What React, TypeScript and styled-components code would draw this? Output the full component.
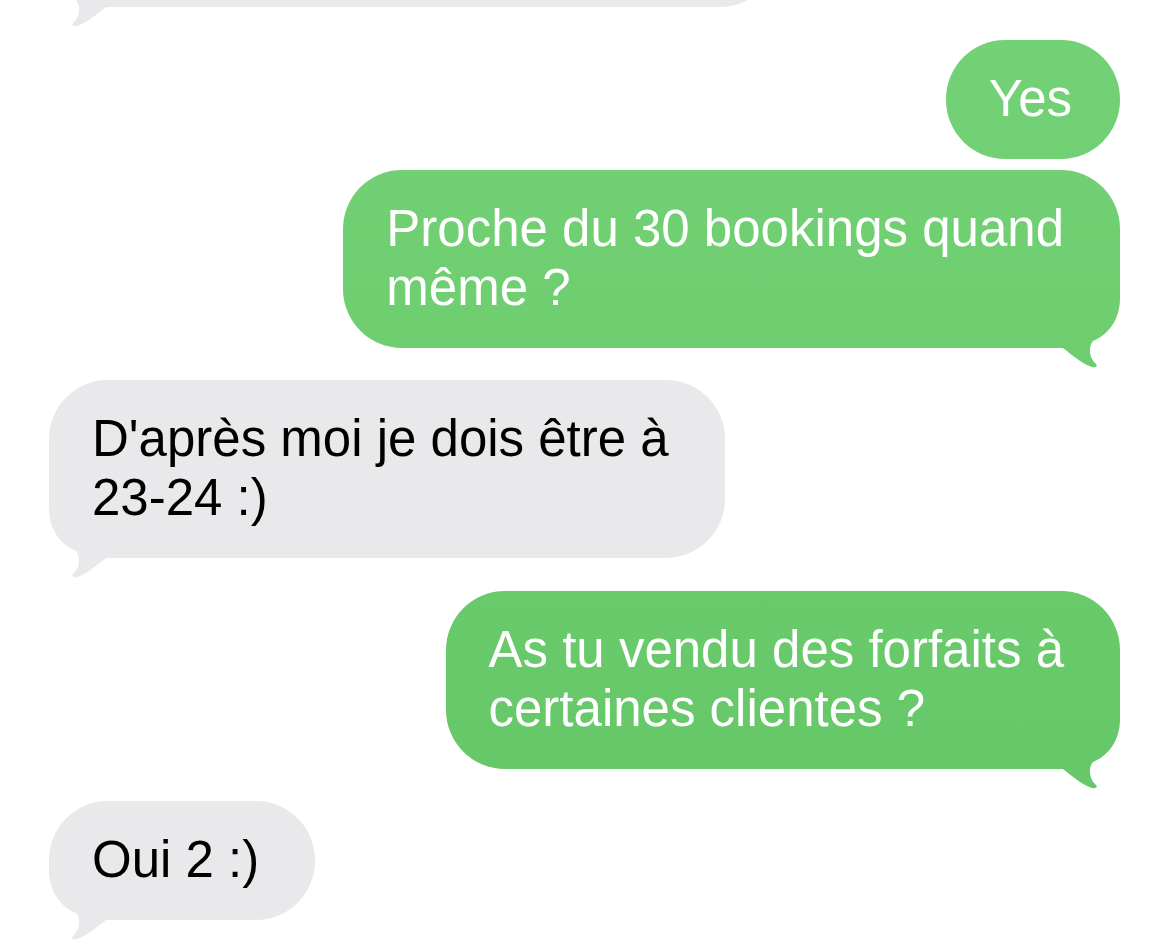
import React from "react";
import styled, { createGlobalStyle, css } from "styled-components";

const GlobalStyle = createGlobalStyle`
  html, body {
    margin: 0;
    padding: 0;
    background: #ffffff;
  }
  #root {
    height: 947px;
    overflow: hidden;
  }
`;

type Side = "in" | "out";

interface Message {
  side: Side;
  lines: string[];
  tail: boolean;
  gap: number;
  width?: number;
  height?: number;
}

const messages: Message[] = [
  { side: "in", lines: [], tail: true, gap: 0, width: 730, height: 180 },
  { side: "out", lines: ["Yes"], tail: false, gap: 33 },
  { side: "out", lines: ["Proche du 30 bookings quand", "même ?"], tail: true, gap: 11 },
  { side: "in", lines: ["D'après moi je dois être à", "23-24 :)"], tail: true, gap: 32 },
  { side: "out", lines: ["As tu vendu des forfaits à", "certaines clientes ?"], tail: true, gap: 33 },
  { side: "in", lines: ["Oui 2 :)"], tail: true, gap: 32 },
];

const greenFill = css`
  background: linear-gradient(to bottom, #74d276 0%, #6bcc6d 50%, #64c566 100%);
  background-attachment: fixed;
`;

const greyFill = css`
  background: #e9e9eb;
`;

const Thread = styled.main`
  box-sizing: border-box;
  height: 947px;
  overflow: hidden;
  display: flex;
  flex-direction: column;
  justify-content: flex-end;
  padding: 0 50px 27px 49px;
  font-family: "Liberation Sans", Arial, Helvetica, sans-serif;
`;

const Row = styled.div<{ $side: Side; $gap: number }>`
  display: flex;
  flex-shrink: 0;
  justify-content: ${(p) => (p.$side === "out" ? "flex-end" : "flex-start")};
  margin-top: ${(p) => p.$gap}px;
`;

const Bubble = styled.div<{ $side: Side; $tail: boolean }>`
  position: relative;
  box-sizing: border-box;
  padding: 29px ${(p) => (p.$tail ? 56 : 48)}px 31px 43px;
  border-radius: 59px;
  font-size: 51px;
  line-height: 59px;
  color: ${(p) => (p.$side === "out" ? "#ffffff" : "#000000")};
  ${(p) => (p.$side === "out" ? greenFill : greyFill)}
`;

const Line = styled.div`
  white-space: nowrap;
  position: relative;
  z-index: 1;
`;

const tailRight =
  "path('M62,0 L62,14 C62,36 50,51 35,57 C30,63 31,74 38,80 C40,82 38,84 34,83 C22,79 11,68 2,62 L0,62 L0,0 Z')";
const tailLeft =
  "path('M0,0 L0,14 C0,36 12,51 27,57 C32,63 31,74 24,80 C22,82 24,84 28,83 C40,79 51,68 60,62 L62,62 L62,0 Z')";

const Tail = styled.span<{ $side: Side }>`
  position: absolute;
  bottom: -20px;
  width: 62px;
  height: 84px;
  ${(p) => (p.$side === "out" ? "right: 0;" : "left: 0;")}
  clip-path: ${(p) => (p.$side === "out" ? tailRight : tailLeft)};
  ${(p) => (p.$side === "out" ? greenFill : greyFill)}
`;

export default function App() {
  return (
    <>
      <GlobalStyle />
      <Thread>
        {messages.map((m, i) => (
          <Row key={i} $side={m.side} $gap={m.gap}>
            <Bubble
              $side={m.side}
              $tail={m.tail}
              style={m.width ? { width: m.width, height: m.height } : undefined}
            >
              {m.lines.map((l, j) => (
                <Line key={j}>{l}</Line>
              ))}
              {m.tail && <Tail $side={m.side} />}
            </Bubble>
          </Row>
        ))}
      </Thread>
    </>
  );
}
